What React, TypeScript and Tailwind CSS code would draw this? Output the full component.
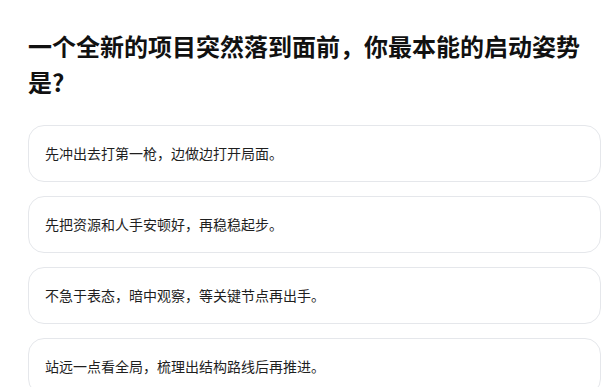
import React from 'react';

const options = [
  '先冲出去打第一枪，边做边打开局面。',
  '先把资源和人手安顿好，再稳稳起步。',
  '不急于表态，暗中观察，等关键节点再出手。',
  '站远一点看全局，梳理出结构路线后再推进。',
];

export default function App() {
  return (
    <div
      className="min-h-screen bg-white pl-7 pr-[2px] pt-7"
      style={{ fontFamily: '"Noto Sans CJK SC", "Noto Sans", sans-serif' }}
    >
      <h1 className="mb-[25px] text-2xl font-bold leading-9 text-[#111111]">
        一个全新的项目突然落到面前，你最本能的启动姿势是?
      </h1>
      <div className="flex flex-col gap-3.5">
        {options.map((text) => (
          <button
            key={text}
            type="button"
            className="w-full rounded-2xl border border-[#e5e7eb] bg-white px-4 py-4 text-left text-sm leading-[23px] text-[#1f1f1f]"
          >
            {text}
          </button>
        ))}
      </div>
    </div>
  );
}
